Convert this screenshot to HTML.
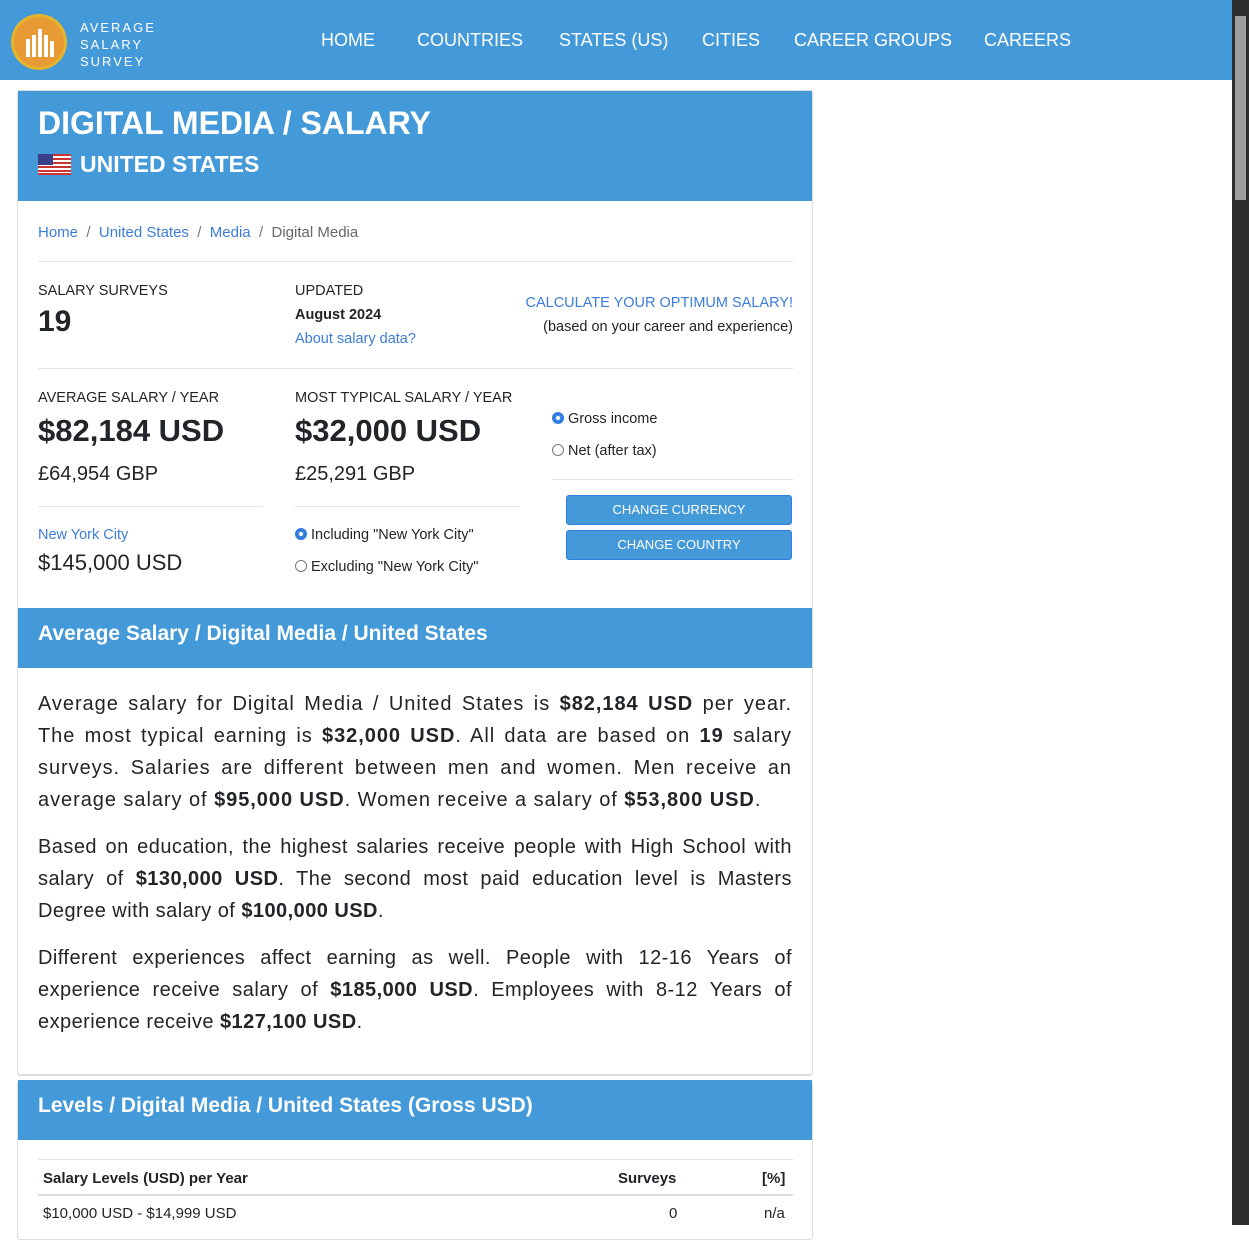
<!DOCTYPE html>
<html><head><meta charset="utf-8"><style>
*{box-sizing:border-box;margin:0;padding:0}
body{width:1249px;height:1225px;overflow:hidden;font-family:"Liberation Sans",sans-serif;color:#212529;background:#fff;position:relative}
.nav{position:absolute;left:0;top:0;width:1232px;height:80px;background:#4499d9}
.nav a{position:absolute;top:30px;color:#fff;font-size:18px;text-decoration:none}
.sb{position:absolute;left:1232px;top:0;width:17px;height:1225px;background:#2c2c2c}
.sb div{position:absolute;left:3px;top:16px;width:11px;height:184px;background:#9e9e9e}
.card{position:absolute;left:17px;width:796px;border:1px solid #ddd;border-radius:3px}
.hd{background:#4499d9;color:#fff}
a{color:#3b7dd8;text-decoration:none}
.abs{position:absolute}
.lbl{font-size:14.5px}
.big{font-size:31px;font-weight:bold}
.hr{position:absolute;height:1px;background:#e3e3e3}
.btn{position:absolute;left:566px;width:226px;height:30px;background:#4499d9;border:1px solid #2f7de0;border-radius:3px;color:#fff;font-size:13px;text-align:center;line-height:28px}
.radio{display:inline-block;width:12px;height:12px;border:1px solid #777;border-radius:50%;vertical-align:-1px;margin-right:4px}
.on{border:3px solid #2f7de0;box-shadow:0 0 0 1px #2f7de0 inset}
p.t{font-size:20px;line-height:32px;text-align:justify;margin-bottom:15px;letter-spacing:0.45px}
</style></head><body>
<div class="nav">
<svg class="abs" style="left:10px;top:13px" width="58" height="58"><circle cx="29" cy="29" r="28" fill="#e6b52c"/><circle cx="29" cy="29" r="25" fill="#e89a35"/><g fill="#fff"><rect x="16" y="26" width="4" height="18"/><rect x="22" y="22" width="4" height="22"/><rect x="28" y="16" width="4" height="28"/><rect x="34" y="22" width="4" height="22"/><rect x="40" y="28" width="4" height="16"/></g></svg>
<div class="abs" style="left:80px;top:19px;color:#fff;font-size:13px;line-height:17px;letter-spacing:2px">AVERAGE<br>SALARY<br>SURVEY</div>
<a style="left:321px">HOME</a><a style="left:417px">COUNTRIES</a><a style="left:559px">STATES (US)</a><a style="left:702px">CITIES</a><a style="left:794px">CAREER GROUPS</a><a style="left:984px">CAREERS</a>
</div>
<div class="sb"><div></div></div>

<div class="card" style="top:90px;height:985px">
<div class="hd" style="height:110px;position:relative">
<div class="abs" style="left:20px;top:14px;font-size:32px;font-weight:bold">DIGITAL MEDIA / SALARY</div>
<svg class="abs" style="left:20px;top:63px" width="33" height="21"><rect width="33" height="21" fill="#fff"/><g fill="#c33"><rect y="0" width="33" height="2"/><rect y="4" width="33" height="2"/><rect y="8" width="33" height="2"/><rect y="12" width="33" height="2"/><rect y="16" width="33" height="2"/><rect y="19" width="33" height="2"/></g><rect width="15" height="11" fill="#3a3f8a"/></svg>
<div class="abs" style="left:62px;top:60px;font-size:23px;font-weight:bold">UNITED STATES</div>
</div>
<div class="abs" style="left:20px;top:133px;font-size:15px"><a>Home</a> <span style="color:#777">&nbsp;/&nbsp;</span> <a>United States</a> <span style="color:#777">&nbsp;/&nbsp;</span> <a>Media</a> <span style="color:#777">&nbsp;/&nbsp;</span> <span style="color:#666">Digital Media</span></div>
<div class="hr" style="left:20px;top:170px;width:755px"></div>
<div class="abs lbl" style="left:20px;top:192px">SALARY SURVEYS</div>
<div class="abs" style="left:20px;top:214px;font-size:30px;font-weight:bold">19</div>
<div class="abs lbl" style="left:277px;top:192px">UPDATED</div>
<div class="abs lbl" style="left:277px;top:216px;font-weight:bold">August 2024</div>
<div class="abs lbl" style="left:277px;top:240px"><a>About salary data?</a></div>
<div class="abs lbl" style="left:505px;top:204px;width:270px;text-align:right"><a>CALCULATE YOUR OPTIMUM SALARY!</a></div>
<div class="abs lbl" style="left:485px;top:228px;width:290px;text-align:right">(based on your career and experience)</div>
<div class="hr" style="left:20px;top:277px;width:755px"></div>
<div class="abs lbl" style="left:20px;top:299px">AVERAGE SALARY / YEAR</div>
<div class="abs big" style="left:20px;top:322px">$82,184 USD</div>
<div class="abs" style="left:20px;top:372px;font-size:20px">£64,954 GBP</div>
<div class="abs lbl" style="left:277px;top:299px">MOST TYPICAL SALARY / YEAR</div>
<div class="abs big" style="left:277px;top:322px">$32,000 USD</div>
<div class="abs" style="left:277px;top:372px;font-size:20px">£25,291 GBP</div>
<div class="hr" style="left:20px;top:415px;width:225px"></div>
<div class="hr" style="left:277px;top:415px;width:225px"></div>
<div class="abs lbl" style="left:20px;top:436px"><a>New York City</a></div>
<div class="abs" style="left:20px;top:459px;font-size:22px">$145,000 USD</div>
<div class="abs lbl" style="left:277px;top:436px"><span class="radio on"></span>Including "New York City"</div>
<div class="abs lbl" style="left:277px;top:468px"><span class="radio"></span>Excluding "New York City"</div>
<div class="abs lbl" style="left:534px;top:320px"><span class="radio on"></span>Gross income</div>
<div class="abs lbl" style="left:534px;top:352px"><span class="radio"></span>Net (after tax)</div>
<div class="hr" style="left:534px;top:388px;width:241px"></div>
</div>
<div class="btn" style="top:495px">CHANGE CURRENCY</div>
<div class="btn" style="top:530px">CHANGE COUNTRY</div>

<div class="card" style="top:608px;height:468px;border-top:none">
<div class="hd" style="height:60px;padding:14px 20px;font-size:21px;font-weight:bold">Average Salary / Digital Media / United States</div>
<div style="padding:20px 20px 0">
<p class="t" style="letter-spacing:0.95px">Average salary for Digital Media / United States is <b>$82,184 USD</b> per year. The most typical earning is <b>$32,000 USD</b>. All data are based on <b>19</b> salary surveys. Salaries are different between men and women. Men receive an average salary of <b>$95,000 USD</b>. Women receive a salary of <b>$53,800 USD</b>.</p>
<p class="t">Based on education, the highest salaries receive people with High School with salary of <b>$130,000 USD</b>. The second most paid education level is Masters Degree with salary of <b>$100,000 USD</b>.</p>
<p class="t">Different experiences affect earning as well. People with 12-16 Years of experience receive salary of <b>$185,000 USD</b>. Employees with 8-12 Years of experience receive <b>$127,100 USD</b>.</p>
</div></div>

<div class="card" style="top:1080px;height:160px;border-top:none">
<div class="hd" style="height:60px;padding:14px 20px;font-size:21px;font-weight:bold">Levels / Digital Media / United States (Gross USD)</div>
<div class="hr" style="left:20px;top:79px;width:755px"></div>
<div class="abs" style="left:25px;top:90px;font-size:15px;font-weight:bold">Salary Levels (USD) per Year</div>
<div class="abs" style="left:600px;top:90px;font-size:15px;font-weight:bold">Surveys</div>
<div class="abs" style="left:744px;top:90px;font-size:15px;font-weight:bold">[%]</div>
<div class="abs" style="left:20px;top:114px;width:755px;height:2px;background:#ddd"></div>
<div class="abs" style="left:25px;top:125px;font-size:15px">$10,000 USD - $14,999 USD</div>
<div class="abs" style="left:651px;top:125px;font-size:15px">0</div>
<div class="abs" style="left:746px;top:125px;font-size:15px">n/a</div>
</div>
</body></html>
